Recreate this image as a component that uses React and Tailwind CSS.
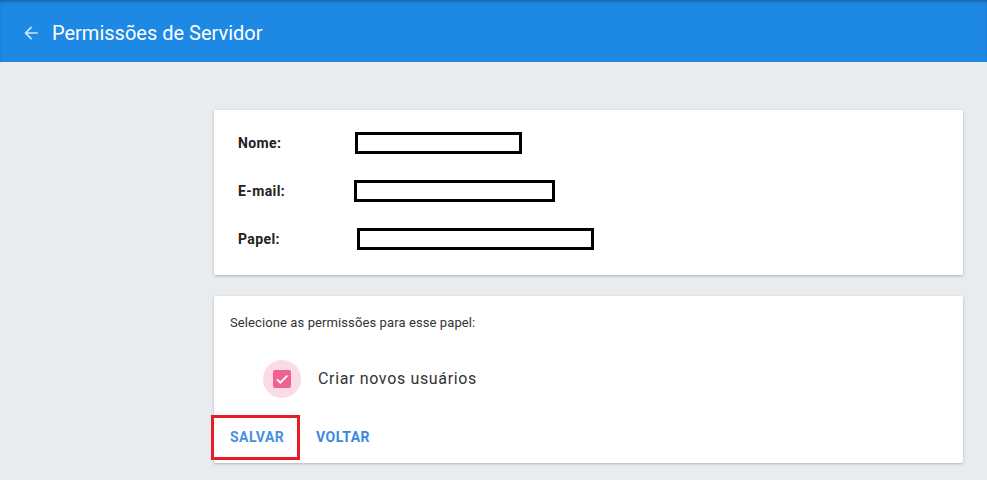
import React from 'react'

function Redacted({ w }) {
  return <div className="h-[22px] border-[3px] border-black bg-white" style={{ width: w }} />
}

export default function App() {
  return (
    <div className="min-h-[480px] bg-[#e9ecef] font-['Roboto',sans-serif]">
      {/* Top bar */}
      <header className="h-[62px] bg-[#1e88e5] flex items-center pl-[21px] pt-[4px] shadow-[inset_0_3px_3px_-1px_rgba(0,0,0,0.25)]">
        <svg width="20" height="20" viewBox="0 0 24 24" className="text-[#cfe5fb]">
          <path d="M20 11H7.83l5.59-5.59L12 4l-8 8 8 8 1.41-1.41L7.83 13H20v-2z" fill="currentColor" />
        </svg>
        <h1 className="ml-[11px] text-white text-[20px] font-normal">Permissões de Servidor</h1>
      </header>

      <main className="pl-[214px] pr-[24px] pt-[48px] flex flex-col gap-[21px]">
        {/* Info card */}
        <section className="bg-white rounded-[2px] shadow-[0_1px_3px_rgba(0,0,0,0.25)] h-[165px] pl-[24px] pt-[22px] flex flex-col gap-[26px]">
          <div className="flex items-center h-[22px]">
            <span className="w-[117px] text-[14px] font-bold tracking-[0.4px] text-[#212121]">Nome:</span>
            <Redacted w={167} />
          </div>
          <div className="flex items-center h-[22px]">
            <span className="w-[116px] text-[14px] font-bold tracking-[0.4px] text-[#212121]">E-mail:</span>
            <Redacted w={201} />
          </div>
          <div className="flex items-center h-[22px]">
            <span className="w-[119px] text-[14px] font-bold tracking-[0.4px] text-[#212121]">Papel:</span>
            <Redacted w={237} />
          </div>
        </section>

        {/* Permissions card */}
        <section className="bg-white rounded-[2px] shadow-[0_1px_3px_rgba(0,0,0,0.25)] h-[167px]">
          <p className="pl-[16px] pt-[17px] text-[13px] tracking-[0.1px] text-[#333]">Selecione as permissões para esse papel:</p>
          <label className="flex items-center ml-[49px] mt-[27px]">
            <span className="w-[38px] h-[38px] rounded-full bg-[#fadbe6] flex items-center justify-center">
              <span className="w-[18px] h-[18px] rounded-[2px] bg-[#f06292] flex items-center justify-center">
                <svg width="16" height="16" viewBox="0 0 24 24">
                  <path d="M4.5 12.5l5 5L20 7" stroke="white" strokeWidth="2.8" fill="none" />
                </svg>
              </span>
            </span>
            <span className="ml-[17px] text-[16px] text-[#333] tracking-[0.65px]">Criar novos usuários</span>
          </label>
          <div className="flex items-center mt-[17px]">
            <button className="ml-[-3px] w-[89px] h-[45px] border-[3px] border-[#e81c24] pl-[16px] text-left text-[14px] font-bold text-[#4a8fe0] tracking-[0.5px]">SALVAR</button>
            <button className="ml-[16px] text-[14px] font-bold text-[#3d86e0] tracking-[0.5px]">VOLTAR</button>
          </div>
        </section>
      </main>
    </div>
  )
}
